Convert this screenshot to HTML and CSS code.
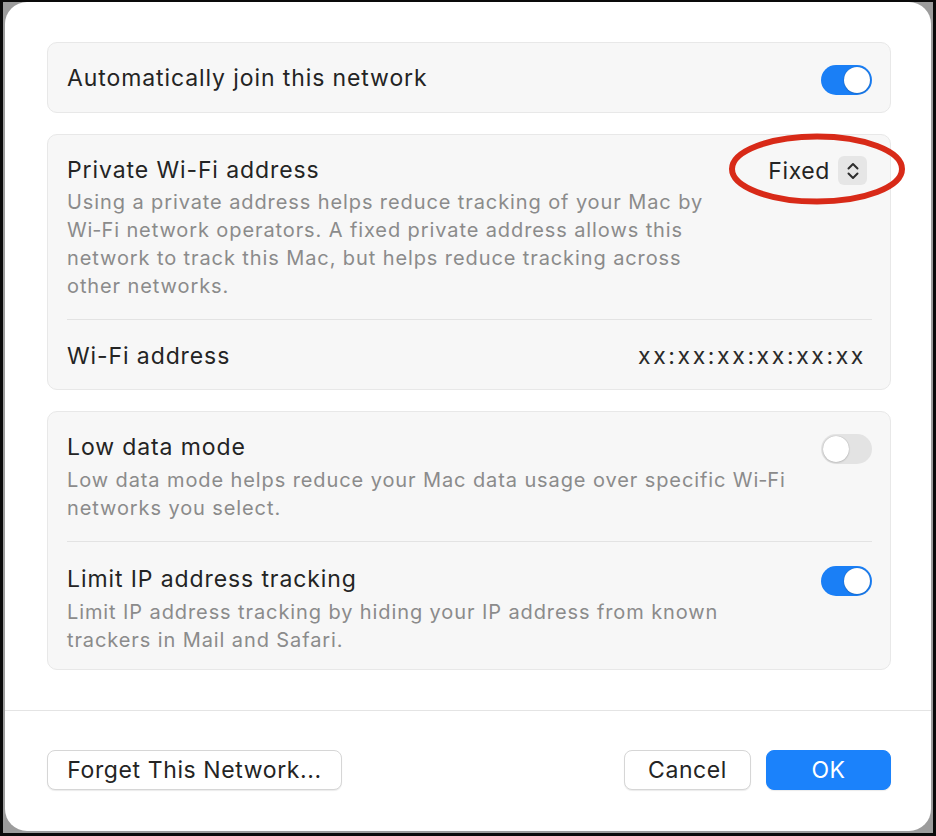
FILE: index.html
```html
<!DOCTYPE html>
<html lang="en">
<head>
<meta charset="utf-8">
<title>Network settings</title>
<link rel="stylesheet" href="styles.css">
</head>
<body>
<div class="frame">
  <div class="dialog">
    <div class="content">
      <section class="card">
        <div class="row single">
          <span class="title">Automatically join this network</span>
          <span class="toggle on"><span class="knob"></span></span>
        </div>
      </section>

      <section class="card">
        <div class="row block">
          <div class="text narrow">
            <div class="title">Private Wi-Fi address</div>
            <div class="desc">Using a private address helps reduce tracking of your Mac by Wi&#8209;Fi network operators. A fixed private address allows this network to track this Mac, but helps reduce tracking across other networks.</div>
          </div>
          <div class="popup">
            <span class="popup-label">Fixed</span>
            <span class="stepper">
              <svg width="14" height="20" viewBox="0 0 14 20"><path d="M2.5 7.5 L7 3 L11.5 7.5 M2.5 12.5 L7 17 L11.5 12.5" fill="none" stroke="#2d2d2d" stroke-width="2" stroke-linecap="round" stroke-linejoin="round"/></svg>
            </span>
            <svg class="ring" width="180" height="74" viewBox="0 0 180 74"><ellipse cx="90" cy="37" rx="85" ry="32.5" fill="none" stroke="#d82a18" stroke-width="6"/></svg>
          </div>
        </div>
        <div class="divider"></div>
        <div class="row addr">
          <span class="title">Wi-Fi address</span>
          <span class="mac">xx:xx:xx:xx:xx:xx</span>
        </div>
      </section>

      <section class="card data">
        <div class="row block">
          <div class="text">
            <div class="title">Low data mode</div>
            <div class="desc">Low data mode helps reduce your Mac data usage over specific Wi&#8209;Fi networks you select.</div>
          </div>
          <span class="toggle off"><span class="knob"></span></span>
        </div>
        <div class="divider"></div>
        <div class="row block last">
          <div class="text">
            <div class="title">Limit IP address tracking</div>
            <div class="desc">Limit IP address tracking by hiding your IP address from known trackers in Mail and Safari.</div>
          </div>
          <span class="toggle on"><span class="knob"></span></span>
        </div>
      </section>
    </div>

    <div class="footer">
      <button class="btn forget">Forget This Network...</button>
      <div class="right-buttons">
        <button class="btn cancel">Cancel</button>
        <button class="btn primary">OK</button>
      </div>
    </div>
  </div>
</div>
</body>
</html>
```

FILE: styles.css
```css
* { box-sizing: border-box; }

html, body {
  margin: 0;
  padding: 0;
  width: 936px;
  height: 836px;
  overflow: hidden;
  background: #000;
}

.frame {
  width: 936px;
  height: 836px;
  border: 3px solid #0a0a0a;
  border-top-width: 2px;
  background: #9c9c9c;
  padding: 0 2px 2px 2px;
}

.dialog {
  height: 100%;
  background: #ffffff;
  border-radius: 22px;
  display: flex;
  flex-direction: column;
  font-family: "Inter", "Liberation Sans", sans-serif;
  color: #242424;
}

.content {
  padding: 40px 40px 40px 42px;
  display: flex;
  flex-direction: column;
  gap: 21px;
  border-bottom: 1px solid #e4e4e4;
}

.card {
  background: #f7f7f7;
  border: 1px solid #e8e8e8;
  border-radius: 10px;
  padding: 0 18px 0 19px;
}

.row {
  display: flex;
  justify-content: space-between;
}

.row.single {
  height: 69px;
  align-items: center;
}

.row.single .toggle { margin-top: 4px; }

.row.block {
  padding: 21px 0 19px;
  align-items: flex-start;
}

.row.block.last { padding: 23px 0 15px; }

.title {
  font-size: 23px;
  line-height: 28px;
  letter-spacing: 0.9px;
}

.desc {
  margin-top: 4px;
  font-size: 20px;
  line-height: 28px;
  color: #8b8b8b;
  letter-spacing: 0.9px;
}

.card.data .desc { margin-top: 5px; }

.text {
  flex: 1;
  margin-right: 24px;
}

.text.narrow { margin-right: 40px; }

.divider {
  height: 1px;
  background: #e3e3e3;
}

.row.addr {
  height: 69px;
  align-items: center;
  padding: 3px 6px 0 0;
}

.mac {
  font-size: 23px;
  letter-spacing: 2.6px;
  color: #2a2a2a;
}

.toggle {
  position: relative;
  flex: none;
  width: 51px;
  height: 30px;
  border-radius: 15px;
  margin-top: 1px;
}

.toggle.on { background: #1a7ff6; }
.toggle.off { background: #e3e3e3; }

.knob {
  position: absolute;
  top: 2px;
  width: 26px;
  height: 26px;
  border-radius: 50%;
  background: #fff;
  box-shadow: 0 0 1px rgba(0,0,0,0.35), 0 1px 2px rgba(0,0,0,0.12);
}

.toggle.on .knob { right: 2px; }
.toggle.off .knob { left: 2px; }

.popup {
  position: relative;
  display: flex;
  align-items: center;
  gap: 8px;
  padding-right: 5px;
}

.popup-label {
  font-size: 23px;
  line-height: 28px;
  letter-spacing: 0.6px;
}

.stepper {
  width: 29px;
  height: 29px;
  border-radius: 6px;
  background: #e6e6e6;
  display: flex;
  align-items: center;
  justify-content: center;
}

.ring {
  position: absolute;
  right: -35px;
  top: -24px;
  pointer-events: none;
}

.footer {
  flex: 1;
  display: flex;
  justify-content: space-between;
  align-items: flex-start;
  padding: 39px 40px 0 42px;
}

.right-buttons {
  display: flex;
  gap: 15px;
}

.btn {
  font-family: "Inter", "Liberation Sans", sans-serif;
  font-size: 23px;
  letter-spacing: 0.6px;
  height: 40px;
  border-radius: 8px;
  border: 1px solid #d6d6d6;
  background: #fff;
  color: #242424;
  padding: 0 15px;
  box-shadow: 0 1px 1px rgba(0,0,0,0.08);
}

.btn.forget { width: 295px; }
.btn.cancel { width: 127px; }

.btn.primary {
  width: 125px;
  background: #1b82fb;
  border-color: #1b82fb;
  color: #fff;
}
```
